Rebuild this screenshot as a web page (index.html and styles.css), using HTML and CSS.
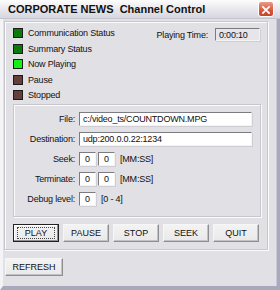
FILE: index.html
```html
<!DOCTYPE html>
<html lang="en">
<head>
    <meta charset="UTF-8">
    <title>Channel Control</title>
    <link rel="stylesheet" href="styles.css">
</head>
<body>
    <div class="window">
        <div class="titlebar">
            <span class="title">CORPORATE NEWS&nbsp; Channel Control</span>
            <span class="close">
                <svg width="16" height="16" viewBox="0 0 16 16">
                    <path d="M4.5 4.5 L11.5 11.5 M11.5 4.5 L4.5 11.5" stroke="#fff" stroke-width="2" stroke-linecap="square"/>
                </svg>
            </span>
        </div>
        <div class="client">
            <div class="group outer">
                <div class="top">
                    <ul class="lights">
                        <li><i class="on"></i>Communication Status</li>
                        <li><i class="on"></i>Summary Status</li>
                        <li><i class="lit"></i>Now Playing</li>
                        <li><i class="off"></i>Pause</li>
                        <li><i class="off"></i>Stopped</li>
                    </ul>
                    <div class="timer">
                        <span>Playing Time:</span>
                        <span class="field time">0:00:10</span>
                    </div>
                </div>
                <div class="group inner">
                    <div class="row">
                        <label>File:</label>
                        <span class="field wide">c:/video_ts/COUNTDOWN.MPG</span>
                    </div>
                    <div class="row">
                        <label>Destination:</label>
                        <span class="field wide">udp:200.0.0.22:1234</span>
                    </div>
                    <div class="row">
                        <label>Seek:</label>
                        <span class="field num">0</span>
                        <span class="field num">0</span>
                        <span class="hint">[MM:SS]</span>
                    </div>
                    <div class="row">
                        <label>Terminate:</label>
                        <span class="field num">0</span>
                        <span class="field num">0</span>
                        <span class="hint">[MM:SS]</span>
                    </div>
                    <div class="row">
                        <label>Debug level:</label>
                        <span class="field num">0</span>
                        <span class="hint">[0 - 4]</span>
                    </div>
                </div>
                <div class="buttons">
                    <button class="btn default"><span>PLAY</span></button>
                    <button class="btn">PAUSE</button>
                    <button class="btn">STOP</button>
                    <button class="btn">SEEK</button>
                    <button class="btn">QUIT</button>
                </div>
            </div>
            <button class="btn refresh">REFRESH</button>
        </div>
    </div>
</body>
</html>
```
FILE: styles.css
```css
* {
    padding: 0;
    margin: 0;
    box-sizing: border-box;
}

ul {
    list-style: none;
}

body {
    font-family: "Liberation Sans", Arial, sans-serif;
    font-size: 9px;
    letter-spacing: -0.2px;
    color: #111;
    background: #e1e0e5;
}

.window {
    width: 280px;
    height: 290px;
    background: #e1e0e5;
    border-left: 3px solid #f4f4f6;
    border-right: 3px solid #a9a9bd;
    border-bottom: 4px solid #a9a9bd;
    box-shadow: inset -1px 0 #c9c8d4;
}

.titlebar {
    height: 19px;
    margin-left: -3px;
    margin-right: -3px;
    padding: 0 0 0 8px;
    display: flex;
    align-items: center;
    justify-content: space-between;
    background: linear-gradient(#fdfdfd, #e8e8ee 50%, #d6d6df);
    border-bottom: 1px solid #c4c4cf;
}

.title {
    font-weight: bold;
    font-size: 11px;
    letter-spacing: 0;
    color: #111;
}

.close {
    width: 16px;
    height: 16px;
    margin-right: 6px;
    border-radius: 3px;
    background: linear-gradient(#e99b86, #d8563a 60%, #c8422a);
    border: 1px solid #fff;
    display: flex;
}

.client {
    padding: 2px 0 0 1px;
}

.group {
    border: 1px solid #c8c7cd;
    box-shadow: inset 1px 1px #fbfbfc, 1px 1px #fbfbfc;
}

.outer {
    width: 264px;
    height: 229px;
    padding: 6px 7px 0 8px;
}

.top {
    display: flex;
    justify-content: space-between;
    height: 76px;
}

.lights li {
    height: 15.5px;
    display: flex;
    align-items: flex-start;
    line-height: 11px;
}

.lights i {
    width: 10px;
    height: 10px;
    margin-right: 5px;
    border: 1px solid #1a1a1a;
}

.lights .on {
    background: #0b7a0b;
}

.lights .lit {
    background: #14f014;
}

.lights .off {
    background: #63403c;
}

.timer {
    display: flex;
    align-items: flex-start;
    gap: 7px;
}

.timer span:first-child {
    margin-top: 2px;
}

.field {
    display: inline-block;
    height: 14px;
    padding: 1px 0 0 3px;
    line-height: 11px;
    background: #fff;
    border-top: 1px solid #7c7b80;
    border-left: 1px solid #7c7b80;
    border-right: 1px solid #f4f4f4;
    border-bottom: 1px solid #f4f4f4;
    box-shadow: 1px 1px #cfced3;
}

.time {
    width: 45px;
    height: 13px;
    background: #e6e5ea;
}

.inner {
    width: 248px;
    height: 113px;
    padding: 7px 0 0 0;
}

.row {
    display: flex;
    align-items: center;
    height: 14px;
    margin-bottom: 6px;
}

.row label {
    width: 61px;
    text-align: right;
    margin-right: 4px;
}

.wide {
    width: 173px;
}

.num {
    width: 17px;
    margin-right: 2px;
    text-align: center;
    padding-left: 0;
}

.hint {
    margin-left: 3px;
}

.buttons {
    display: flex;
    gap: 4px;
    margin-top: 7px;
}

.btn {
    width: 46px;
    height: 18px;
    font-family: inherit;
    font-size: 9px;
    letter-spacing: 0;
    color: #111;
    background: linear-gradient(#f3f3f3, #e9e9ea);
    border: 1px solid #f6f6f6;
    border-right-color: #8f8e93;
    border-bottom-color: #8f8e93;
    box-shadow: inset -1px -1px #c2c1c6;
}

.default {
    border: 1px solid #222;
    box-shadow: inset -1px -1px #8f8e93, inset 1px 1px #fff;
}

.default span {
    display: block;
    margin: 0 3px;
    border: 1px dotted #444;
    line-height: 10px;
}

.refresh {
    width: 58px;
    margin: 8px 0 0 1px;
}
```
